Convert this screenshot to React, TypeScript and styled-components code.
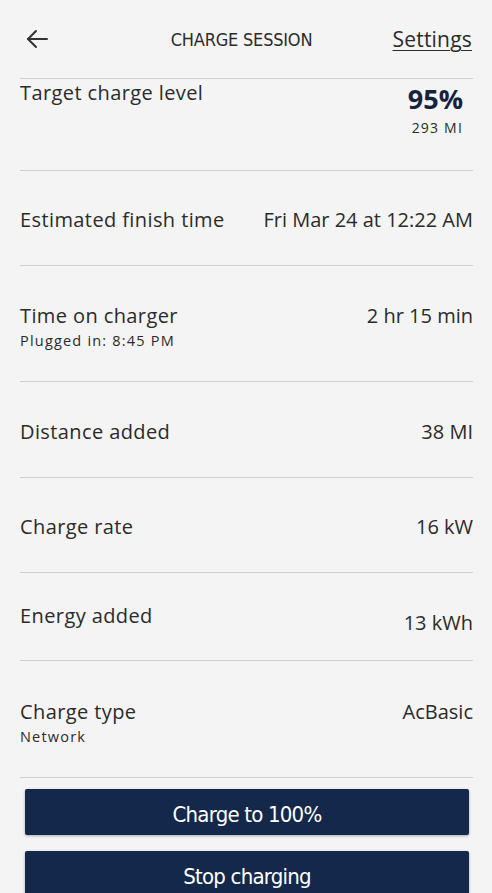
import styled, { createGlobalStyle } from "styled-components";

const GlobalStyle = createGlobalStyle`
  html, body {
    margin: 0;
    padding: 0;
    background: #f4f4f4;
  }
  body {
    font-family: "Open Sans", "Liberation Sans", sans-serif;
    color: #2b2b2b;
    overflow: hidden;
  }
`;

const Screen = styled.div`
  width: 492px;
  height: 893px;
  overflow: hidden;
  background: #f4f4f4;
`;

const Header = styled.header`
  display: grid;
  grid-template-columns: 1fr auto 1fr;
  align-items: center;
  height: 78px;
  padding: 0 20px 0 25px;
  box-sizing: border-box;
`;

const BackButton = styled.button`
  justify-self: start;
  display: flex;
  border: 0;
  background: none;
  padding: 0;
  color: #333;
  cursor: pointer;
`;

const Title = styled.h1`
  margin: 0 14px 0 0;
  font-family: "DejaVu Sans Condensed", "Liberation Sans", sans-serif;
  font-size: 18px;
  font-weight: 400;
  color: #2b2b2b;
  letter-spacing: -0.2px;
`;

const SettingsLink = styled.a`
  justify-self: end;
  font-size: 21px;
  letter-spacing: 0.2px;
  color: #2b2b2b;
  text-decoration: underline;
  text-underline-offset: 3px;
  text-decoration-thickness: 1px;
`;

const List = styled.div`
  margin: 0 19px 0 20px;
`;

const Row = styled.div<{ $top: number; $bottom: number }>`
  display: flex;
  justify-content: space-between;
  align-items: flex-start;
  border-top: 1px solid #cfcfcf;
  padding: ${({ $top, $bottom }) => `${$top}px 0 ${$bottom}px`};

  &:last-child {
    border-bottom: 1px solid #cfcfcf;
  }
`;

const LabelBlock = styled.div`
  display: flex;
  flex-direction: column;
`;

const Label = styled.span`
  font-size: 20px;
  line-height: 26px;
  letter-spacing: 0.4px;
  color: #2b2b2b;
`;

const SubLabel = styled.span`
  font-size: 14.5px;
  line-height: 24px;
  letter-spacing: 1.2px;
  color: #2b2b2b;
`;

const Value = styled.span<{ $offset?: number }>`
  font-size: 20px;
  line-height: 26px;
  color: #2b2b2b;
  margin-top: ${({ $offset }) => $offset ?? 0}px;
`;

const BigValue = styled.div`
  display: flex;
  flex-direction: column;
  align-items: flex-end;
  margin-top: 5px;
  padding-right: 10px;
`;

const Percent = styled.span`
  font-size: 27px;
  font-weight: 700;
  line-height: 28px;
  color: #16233f;
`;

const Range = styled.span`
  font-size: 14px;
  line-height: 30px;
  letter-spacing: 1.2px;
  color: #2b2b2b;
`;

const Actions = styled.div`
  display: flex;
  flex-direction: column;
  gap: 16px;
  padding: 11px 23px 0 25px;
`;

const ActionButton = styled.button`
  height: 46px;
  padding: 5px 0 0;
  border: 0;
  border-radius: 2px;
  background: #13284b;
  color: #fff;
  font-family: "DejaVu Sans Condensed", "Liberation Sans", sans-serif;
  font-size: 22px;
  letter-spacing: -0.8px;
  box-shadow: 0 1px 3px rgba(0, 0, 0, 0.3);
  cursor: pointer;
`;

const BackArrow = () => (
  <svg width="24" height="24" viewBox="0 0 24 24" fill="none" stroke="currentColor" strokeWidth="2" strokeLinecap="round" strokeLinejoin="round">
    <path d="M22 12H3" />
    <path d="M11 4l-8 8 8 8" />
  </svg>
);

const rows = [
  { label: "Estimated finish time", value: "Fri Mar 24 at 12:22 AM", top: 36, bottom: 32 },
  { label: "Time on charger", sub: "Plugged in: 8:45 PM", value: "2 hr 15 min", top: 37, bottom: 28 },
  { label: "Distance added", value: "38 MI", top: 37, bottom: 32 },
  { label: "Charge rate", value: "16 kW", top: 36, bottom: 32 },
  { label: "Energy added", value: "13 kWh", top: 30, bottom: 24, offset: 7 },
  { label: "Charge type", sub: "Network", value: "AcBasic", top: 38, bottom: 28 },
];

export default function App() {
  return (
    <Screen>
      <GlobalStyle />
      <Header>
        <BackButton aria-label="Back">
          <BackArrow />
        </BackButton>
        <Title>CHARGE SESSION</Title>
        <SettingsLink>Settings</SettingsLink>
      </Header>
      <List>
        <Row $top={1} $bottom={27}>
          <Label>Target charge level</Label>
          <BigValue>
            <Percent>95%</Percent>
            <Range>293 MI</Range>
          </BigValue>
        </Row>
        {rows.map((r) => (
          <Row key={r.label} $top={r.top} $bottom={r.bottom}>
            <LabelBlock>
              <Label>{r.label}</Label>
              {r.sub && <SubLabel>{r.sub}</SubLabel>}
            </LabelBlock>
            <Value $offset={r.offset}>{r.value}</Value>
          </Row>
        ))}
      </List>
      <Actions>
        <ActionButton>Charge to 100%</ActionButton>
        <ActionButton>Stop charging</ActionButton>
      </Actions>
    </Screen>
  );
}
